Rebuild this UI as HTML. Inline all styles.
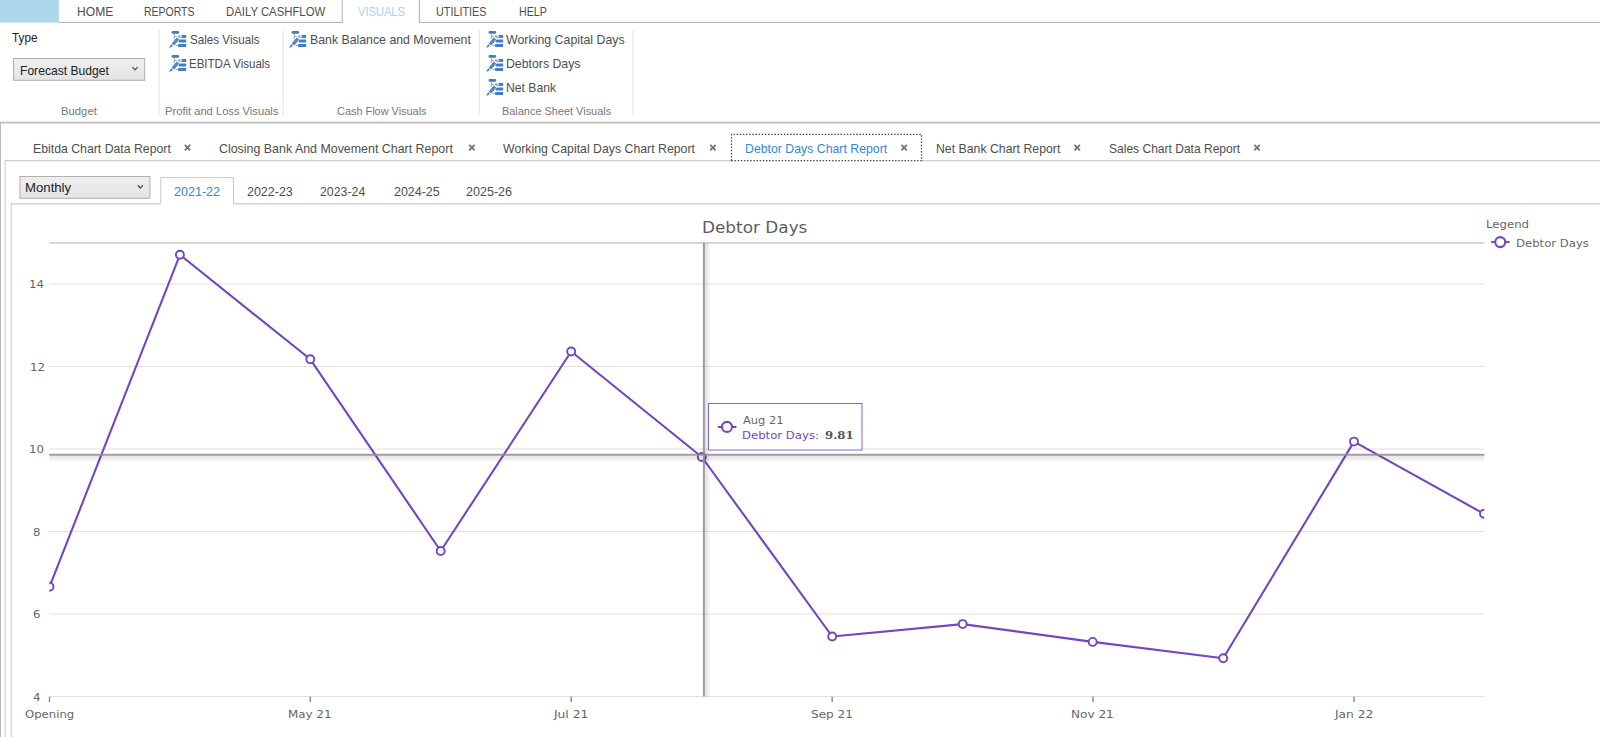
<!DOCTYPE html>
<html lang="en">
<head>
<meta charset="utf-8">
<title>Debtor Days Chart Report</title>
<style>
html,body{margin:0;padding:0;background:#fff;}
body{width:1600px;height:737px;position:relative;overflow:hidden;font-family:"Liberation Sans",sans-serif;}
.abs{position:absolute;}
.layer{position:absolute;left:0;top:0;width:1600px;height:737px;}
.t{position:absolute;white-space:nowrap;line-height:1;transform-origin:0 0;}
.ico{position:absolute;width:18px;height:18px;overflow:visible;}
</style>
</head>
<body>
<!-- ribbon + workspace chrome -->
<svg class="layer" id="chrome" width="1600" height="737" viewBox="0 0 1600 737">
<defs>
<linearGradient id="selg" x1="0" y1="0" x2="0" y2="1"><stop offset="0" stop-color="#efefef"/><stop offset="1" stop-color="#e4e4e4"/></linearGradient>
<linearGradient id="ribg" x1="0" y1="0" x2="0" y2="1"><stop offset="0" stop-color="#b2b2b2"/><stop offset="1" stop-color="#d2d2d2"/></linearGradient>
</defs>
<rect x="0" y="0" width="58.9" height="22.6" fill="#aed7eb"/>
<circle cx="7.5" cy="16.4" r="0.55" fill="#cdbab6"/>
<circle cx="13.5" cy="15.5" r="0.55" fill="#cdbab6"/>
<circle cx="19.5" cy="15.5" r="0.55" fill="#cdbab6"/>
<circle cx="25.5" cy="15.5" r="0.55" fill="#cdbab6"/>
<circle cx="31.5" cy="15.5" r="0.55" fill="#cdbab6"/>
<circle cx="37.5" cy="15.5" r="0.55" fill="#cdbab6"/>
<circle cx="43.5" cy="15.5" r="0.55" fill="#cdbab6"/>
<circle cx="49.5" cy="15.5" r="0.55" fill="#cdbab6"/>
<rect x="58.9" y="21.9" width="283.8" height="1" fill="#b0b0b0"/>
<rect x="418.9" y="21.9" width="1181.1" height="1" fill="#b0b0b0"/>
<rect x="341.7" y="0" width="1" height="22.9" fill="#b0b0b0"/>
<rect x="418.9" y="0" width="1" height="22.9" fill="#b0b0b0"/>
<rect x="13.5" y="58.5" width="131.2" height="21.8" fill="url(#selg)" stroke="#b0b0b0" stroke-width="1"/>
<path d="M132.4 67.1 L135 69.9 L137.6 67.1" fill="none" stroke="#505050" stroke-width="1.3"/>
<rect x="158.6" y="30" width="1" height="85.4" fill="#e1e1e1"/>
<rect x="282.6" y="30" width="1" height="85.4" fill="#e1e1e1"/>
<rect x="478.8" y="30" width="1" height="85.4" fill="#e1e1e1"/>
<rect x="632.6" y="30" width="1" height="85.4" fill="#e1e1e1"/>
<rect x="0" y="121.7" width="1600" height="2" fill="url(#ribg)"/>
<rect x="0" y="122" width="1" height="615" fill="#b9b9b9"/>
<rect x="5" y="160.1" width="726.5" height="1.2" fill="#c8c8c8"/>
<rect x="921.5" y="160.1" width="678.5" height="1.2" fill="#c8c8c8"/>
<rect x="4.6" y="160.2" width="1" height="577" fill="#c8c8c8"/>
<path d="M731.5 160.7 V134.3 H921.5 V160.7 Z" fill="#fff" stroke="#444" stroke-width="1.25" stroke-dasharray="1.45 1.7"/>
<rect x="11" y="203.2" width="150" height="1.2" fill="#c8c8c8"/>
<rect x="233" y="203.2" width="1367" height="1.2" fill="#c8c8c8"/>
<rect x="10.7" y="203.3" width="1" height="534" fill="#c8c8c8"/>
<path d="M160.8 203.8 V177.6 H233.5 V203.8" fill="#fff" stroke="#c6c6c6" stroke-width="1"/>
<rect x="19.9" y="176.5" width="130" height="21.8" fill="url(#selg)" stroke="#b0b0b0" stroke-width="1"/>
<path d="M137.7 185.2 L140.3 188 L142.9 185.2" fill="none" stroke="#505050" stroke-width="1.3"/>
<path d="M184.8 144.9 L190.2 150.29999999999998 M190.2 144.9 L184.8 150.29999999999998" stroke="#707070" stroke-width="1.7" fill="none"/>
<path d="M469.2 144.9 L474.59999999999997 150.29999999999998 M474.59999999999997 144.9 L469.2 150.29999999999998" stroke="#707070" stroke-width="1.7" fill="none"/>
<path d="M710.1999999999999 144.9 L715.6 150.29999999999998 M715.6 144.9 L710.1999999999999 150.29999999999998" stroke="#707070" stroke-width="1.7" fill="none"/>
<path d="M901.4499999999999 144.9 L906.85 150.29999999999998 M906.85 144.9 L901.4499999999999 150.29999999999998" stroke="#707070" stroke-width="1.7" fill="none"/>
<path d="M1074.5 144.9 L1079.9 150.29999999999998 M1079.9 144.9 L1074.5 150.29999999999998" stroke="#707070" stroke-width="1.7" fill="none"/>
<path d="M1254.3 144.9 L1259.7 150.29999999999998 M1259.7 144.9 L1254.3 150.29999999999998" stroke="#707070" stroke-width="1.7" fill="none"/>
</svg>
<!-- ribbon item icons -->
<svg class="ico" style="left:169px;top:30px;" viewBox="0 0 18 18">
<path d="M5.3 3.6 V9 M5.3 6.6 H7.8 M6.8 15.5 H10" fill="none" stroke="#9a9a9a" stroke-width="0.9"/>
<rect x="2.6" y="1" width="7.5" height="2.7" rx="0.9" fill="#3f7fc1"/>
<rect x="9.6" y="5" width="7.6" height="2.9" rx="0.3" fill="#3f7fc1"/>
<rect x="9.6" y="9.5" width="7.6" height="2.9" rx="0.3" fill="#3f7fc1"/>
<rect x="9.2" y="14" width="8" height="2.9" rx="0.3" fill="#3f7fc1"/>
<path d="M11.9 4.9 L2.2 16.3" stroke="#fff" stroke-opacity="0.9" stroke-width="3.9" fill="none"/>
<path d="M11.2 5.8 L9.6 7.7" stroke="#8db4de" stroke-width="2.8" fill="none"/>
<path d="M8.9 8.6 L4 14.4" stroke="#3f7fc1" stroke-width="3.1" fill="none"/>
<path d="M8.6 8.9 L4.2 14.1" stroke="#6a9bd2" stroke-width="0.7" fill="none"/>
<path d="M3.9 15.6 L2.9 16.8 L0.2 18.1 L1.3 15.4 L2.3 14.2 Z" fill="#3f7fc1"/>
</svg>
<svg class="ico" style="left:169px;top:54.1px;" viewBox="0 0 18 18">
<path d="M5.3 3.6 V9 M5.3 6.6 H7.8 M6.8 15.5 H10" fill="none" stroke="#9a9a9a" stroke-width="0.9"/>
<rect x="2.6" y="1" width="7.5" height="2.7" rx="0.9" fill="#3f7fc1"/>
<rect x="9.6" y="5" width="7.6" height="2.9" rx="0.3" fill="#3f7fc1"/>
<rect x="9.6" y="9.5" width="7.6" height="2.9" rx="0.3" fill="#3f7fc1"/>
<rect x="9.2" y="14" width="8" height="2.9" rx="0.3" fill="#3f7fc1"/>
<path d="M11.9 4.9 L2.2 16.3" stroke="#fff" stroke-opacity="0.9" stroke-width="3.9" fill="none"/>
<path d="M11.2 5.8 L9.6 7.7" stroke="#8db4de" stroke-width="2.8" fill="none"/>
<path d="M8.9 8.6 L4 14.4" stroke="#3f7fc1" stroke-width="3.1" fill="none"/>
<path d="M8.6 8.9 L4.2 14.1" stroke="#6a9bd2" stroke-width="0.7" fill="none"/>
<path d="M3.9 15.6 L2.9 16.8 L0.2 18.1 L1.3 15.4 L2.3 14.2 Z" fill="#3f7fc1"/>
</svg>
<svg class="ico" style="left:289px;top:30px;" viewBox="0 0 18 18">
<path d="M5.3 3.6 V9 M5.3 6.6 H7.8 M6.8 15.5 H10" fill="none" stroke="#9a9a9a" stroke-width="0.9"/>
<rect x="2.6" y="1" width="7.5" height="2.7" rx="0.9" fill="#3f7fc1"/>
<rect x="9.6" y="5" width="7.6" height="2.9" rx="0.3" fill="#3f7fc1"/>
<rect x="9.6" y="9.5" width="7.6" height="2.9" rx="0.3" fill="#3f7fc1"/>
<rect x="9.2" y="14" width="8" height="2.9" rx="0.3" fill="#3f7fc1"/>
<path d="M11.9 4.9 L2.2 16.3" stroke="#fff" stroke-opacity="0.9" stroke-width="3.9" fill="none"/>
<path d="M11.2 5.8 L9.6 7.7" stroke="#8db4de" stroke-width="2.8" fill="none"/>
<path d="M8.9 8.6 L4 14.4" stroke="#3f7fc1" stroke-width="3.1" fill="none"/>
<path d="M8.6 8.9 L4.2 14.1" stroke="#6a9bd2" stroke-width="0.7" fill="none"/>
<path d="M3.9 15.6 L2.9 16.8 L0.2 18.1 L1.3 15.4 L2.3 14.2 Z" fill="#3f7fc1"/>
</svg>
<svg class="ico" style="left:485.5px;top:30px;" viewBox="0 0 18 18">
<path d="M5.3 3.6 V9 M5.3 6.6 H7.8 M6.8 15.5 H10" fill="none" stroke="#9a9a9a" stroke-width="0.9"/>
<rect x="2.6" y="1" width="7.5" height="2.7" rx="0.9" fill="#3f7fc1"/>
<rect x="9.6" y="5" width="7.6" height="2.9" rx="0.3" fill="#3f7fc1"/>
<rect x="9.6" y="9.5" width="7.6" height="2.9" rx="0.3" fill="#3f7fc1"/>
<rect x="9.2" y="14" width="8" height="2.9" rx="0.3" fill="#3f7fc1"/>
<path d="M11.9 4.9 L2.2 16.3" stroke="#fff" stroke-opacity="0.9" stroke-width="3.9" fill="none"/>
<path d="M11.2 5.8 L9.6 7.7" stroke="#8db4de" stroke-width="2.8" fill="none"/>
<path d="M8.9 8.6 L4 14.4" stroke="#3f7fc1" stroke-width="3.1" fill="none"/>
<path d="M8.6 8.9 L4.2 14.1" stroke="#6a9bd2" stroke-width="0.7" fill="none"/>
<path d="M3.9 15.6 L2.9 16.8 L0.2 18.1 L1.3 15.4 L2.3 14.2 Z" fill="#3f7fc1"/>
</svg>
<svg class="ico" style="left:485.5px;top:54.1px;" viewBox="0 0 18 18">
<path d="M5.3 3.6 V9 M5.3 6.6 H7.8 M6.8 15.5 H10" fill="none" stroke="#9a9a9a" stroke-width="0.9"/>
<rect x="2.6" y="1" width="7.5" height="2.7" rx="0.9" fill="#3f7fc1"/>
<rect x="9.6" y="5" width="7.6" height="2.9" rx="0.3" fill="#3f7fc1"/>
<rect x="9.6" y="9.5" width="7.6" height="2.9" rx="0.3" fill="#3f7fc1"/>
<rect x="9.2" y="14" width="8" height="2.9" rx="0.3" fill="#3f7fc1"/>
<path d="M11.9 4.9 L2.2 16.3" stroke="#fff" stroke-opacity="0.9" stroke-width="3.9" fill="none"/>
<path d="M11.2 5.8 L9.6 7.7" stroke="#8db4de" stroke-width="2.8" fill="none"/>
<path d="M8.9 8.6 L4 14.4" stroke="#3f7fc1" stroke-width="3.1" fill="none"/>
<path d="M8.6 8.9 L4.2 14.1" stroke="#6a9bd2" stroke-width="0.7" fill="none"/>
<path d="M3.9 15.6 L2.9 16.8 L0.2 18.1 L1.3 15.4 L2.3 14.2 Z" fill="#3f7fc1"/>
</svg>
<svg class="ico" style="left:485.5px;top:78px;" viewBox="0 0 18 18">
<path d="M5.3 3.6 V9 M5.3 6.6 H7.8 M6.8 15.5 H10" fill="none" stroke="#9a9a9a" stroke-width="0.9"/>
<rect x="2.6" y="1" width="7.5" height="2.7" rx="0.9" fill="#3f7fc1"/>
<rect x="9.6" y="5" width="7.6" height="2.9" rx="0.3" fill="#3f7fc1"/>
<rect x="9.6" y="9.5" width="7.6" height="2.9" rx="0.3" fill="#3f7fc1"/>
<rect x="9.2" y="14" width="8" height="2.9" rx="0.3" fill="#3f7fc1"/>
<path d="M11.9 4.9 L2.2 16.3" stroke="#fff" stroke-opacity="0.9" stroke-width="3.9" fill="none"/>
<path d="M11.2 5.8 L9.6 7.7" stroke="#8db4de" stroke-width="2.8" fill="none"/>
<path d="M8.9 8.6 L4 14.4" stroke="#3f7fc1" stroke-width="3.1" fill="none"/>
<path d="M8.6 8.9 L4.2 14.1" stroke="#6a9bd2" stroke-width="0.7" fill="none"/>
<path d="M3.9 15.6 L2.9 16.8 L0.2 18.1 L1.3 15.4 L2.3 14.2 Z" fill="#3f7fc1"/>
</svg>
<!-- chart -->
<svg class="layer" id="chart" width="1600" height="737" viewBox="0 0 1600 737">
<defs><clipPath id="plot"><rect x="49.3" y="243" width="1435" height="454"/></clipPath><linearGradient id="shh" x1="0" y1="0" x2="0" y2="1"><stop offset="0" stop-color="#000" stop-opacity="0.105"/><stop offset="0.7" stop-color="#000" stop-opacity="0.062"/><stop offset="1" stop-color="#000" stop-opacity="0.02"/></linearGradient><linearGradient id="shv" x1="0" y1="0" x2="1" y2="0"><stop offset="0" stop-color="#000" stop-opacity="0.115"/><stop offset="0.7" stop-color="#000" stop-opacity="0.066"/><stop offset="1" stop-color="#000" stop-opacity="0.02"/></linearGradient></defs>
<rect x="49.3" y="283.4" width="1435" height="1" fill="#dfdfdf"/>
<rect x="49.3" y="365.9" width="1435" height="1" fill="#dfdfdf"/>
<rect x="49.3" y="448.5" width="1435" height="1" fill="#dfdfdf"/>
<rect x="49.3" y="531.0" width="1435" height="1" fill="#dfdfdf"/>
<rect x="49.3" y="613.5" width="1435" height="1" fill="#dfdfdf"/>
<rect x="49.3" y="696.1" width="1435" height="1" fill="#dfdfdf"/>
<rect x="49.3" y="242.4" width="1435" height="1.1" fill="#b6b6b6"/>
<rect x="48.75" y="696.7" width="1.5" height="5.4" fill="#8f8f8f"/>
<rect x="309.55" y="696.7" width="1.5" height="5.4" fill="#8f8f8f"/>
<rect x="570.45" y="696.7" width="1.5" height="5.4" fill="#8f8f8f"/>
<rect x="831.45" y="696.7" width="1.5" height="5.4" fill="#8f8f8f"/>
<rect x="1092.25" y="696.7" width="1.5" height="5.4" fill="#8f8f8f"/>
<rect x="1353.25" y="696.7" width="1.5" height="5.4" fill="#8f8f8f"/>
<g clip-path="url(#plot)"><path d="M49.5 586.8 L179.9 254.8 L310.3 359.3 L440.7 551.0 L571.2 351.5 L701.8 457.0 L832.2 636.5 L962.7 624.1 L1092.7 641.9 L1223.2 658.3 L1354 441.6 L1484 513.8" fill="none" stroke="#7446BF" stroke-width="2.1" stroke-linejoin="round"/>
<circle cx="49.5" cy="586.8" r="4" fill="#fff" stroke="#7446BF" stroke-width="1.9"/>
<circle cx="179.9" cy="254.8" r="4" fill="#fff" stroke="#7446BF" stroke-width="1.9"/>
<circle cx="310.3" cy="359.3" r="4" fill="#fff" stroke="#7446BF" stroke-width="1.9"/>
<circle cx="440.7" cy="551.0" r="4" fill="#fff" stroke="#7446BF" stroke-width="1.9"/>
<circle cx="571.2" cy="351.5" r="4" fill="#fff" stroke="#7446BF" stroke-width="1.9"/>
<circle cx="701.8" cy="457.0" r="4" fill="#fff" stroke="#7446BF" stroke-width="1.9"/>
<circle cx="832.2" cy="636.5" r="4" fill="#fff" stroke="#7446BF" stroke-width="1.9"/>
<circle cx="962.7" cy="624.1" r="4" fill="#fff" stroke="#7446BF" stroke-width="1.9"/>
<circle cx="1092.7" cy="641.9" r="4" fill="#fff" stroke="#7446BF" stroke-width="1.9"/>
<circle cx="1223.2" cy="658.3" r="4" fill="#fff" stroke="#7446BF" stroke-width="1.9"/>
<circle cx="1354" cy="441.6" r="4" fill="#fff" stroke="#7446BF" stroke-width="1.9"/>
<circle cx="1484" cy="513.8" r="4" fill="#fff" stroke="#7446BF" stroke-width="1.9"/>
</g>
<rect x="704.8" y="243" width="4.8" height="453.5" fill="url(#shv)"/>
<rect x="49.3" y="455.4" width="1435" height="5.6" fill="url(#shh)"/>
<rect x="702.9" y="243" width="2" height="453.5" fill="#8e8e8e" fill-opacity="0.88"/>
<rect x="49.3" y="453.8" width="1435" height="1.9" fill="#8e8e8e" fill-opacity="0.88"/>
<rect x="708.5" y="403.5" width="153.5" height="46.5" fill="#fff" stroke="#7446BF" stroke-opacity="0.85" stroke-width="1"/>
<path d="M718.6 426.9 H735.6" stroke="#7446BF" stroke-width="2" stroke-linecap="round"/><circle cx="727" cy="426.9" r="5" fill="#fff" stroke="#7446BF" stroke-width="2.1"/>
<path d="M1492 242.1 H1508.8" stroke="#7446BF" stroke-width="2" stroke-linecap="round"/><circle cx="1500.25" cy="242.1" r="5" fill="#fff" stroke="#7446BF" stroke-width="2.1"/>
</svg>
<!-- text -->
<span class="t" style='left:76.50px;top:4.90px;font-size:13px;font-family:"Liberation Sans", sans-serif;color:#4e4e4e;transform:scaleX(0.9309);'>HOME</span>
<span class="t" style='left:144.38px;top:4.90px;font-size:13px;font-family:"Liberation Sans", sans-serif;color:#4e4e4e;transform:scaleX(0.8043);'>REPORTS</span>
<span class="t" style='left:226.06px;top:4.90px;font-size:13px;font-family:"Liberation Sans", sans-serif;color:#4e4e4e;transform:scaleX(0.8726);'>DAILY CASHFLOW</span>
<span class="t" style='left:436.14px;top:4.90px;font-size:13px;font-family:"Liberation Sans", sans-serif;color:#4e4e4e;transform:scaleX(0.8299);'>UTILITIES</span>
<span class="t" style='left:518.62px;top:4.90px;font-size:13px;font-family:"Liberation Sans", sans-serif;color:#4e4e4e;transform:scaleX(0.8210);'>HELP</span>
<span class="t" style='left:357.80px;top:4.90px;font-size:13px;font-family:"Liberation Sans", sans-serif;color:#a5d3ee;transform:scaleX(0.8553);'>VISUALS</span>
<span class="t" style='left:12.16px;top:31.00px;font-size:13px;font-family:"Liberation Sans", sans-serif;color:#222222;transform:scaleX(0.9018);'>Type</span>
<span class="t" style='left:20.15px;top:63.60px;font-size:13px;font-family:"Liberation Sans", sans-serif;color:#222222;transform:scaleX(0.9310);'>Forecast Budget</span>
<span class="t" style='left:61.43px;top:105.80px;font-size:11.3px;font-family:"Liberation Sans", sans-serif;color:#777777;transform:scaleX(0.9999);'>Budget</span>
<span class="t" style='left:164.74px;top:105.80px;font-size:11.3px;font-family:"Liberation Sans", sans-serif;color:#777777;transform:scaleX(0.9888);'>Profit and Loss Visuals</span>
<span class="t" style='left:336.85px;top:105.80px;font-size:11.3px;font-family:"Liberation Sans", sans-serif;color:#777777;transform:scaleX(0.9660);'>Cash Flow Visuals</span>
<span class="t" style='left:502.26px;top:105.80px;font-size:11.3px;font-family:"Liberation Sans", sans-serif;color:#777777;transform:scaleX(0.9673);'>Balance Sheet Visuals</span>
<span class="t" style='left:189.53px;top:32.80px;font-size:13.5px;font-family:"Liberation Sans", sans-serif;color:#4e4e4e;transform:scaleX(0.8618);'>Sales Visuals</span>
<span class="t" style='left:189.40px;top:57.00px;font-size:13.5px;font-family:"Liberation Sans", sans-serif;color:#4e4e4e;transform:scaleX(0.8536);'>EBITDA Visuals</span>
<span class="t" style='left:309.54px;top:32.80px;font-size:13.5px;font-family:"Liberation Sans", sans-serif;color:#4e4e4e;transform:scaleX(0.9119);'>Bank Balance and Movement</span>
<span class="t" style='left:506.10px;top:32.80px;font-size:13.5px;font-family:"Liberation Sans", sans-serif;color:#4e4e4e;transform:scaleX(0.9162);'>Working Capital Days</span>
<span class="t" style='left:505.84px;top:57.00px;font-size:13.5px;font-family:"Liberation Sans", sans-serif;color:#4e4e4e;transform:scaleX(0.9103);'>Debtors Days</span>
<span class="t" style='left:505.85px;top:81.30px;font-size:13.5px;font-family:"Liberation Sans", sans-serif;color:#4e4e4e;transform:scaleX(0.9033);'>Net Bank</span>
<span class="t" style='left:32.54px;top:141.80px;font-size:13.5px;font-family:"Liberation Sans", sans-serif;color:#4e4e4e;transform:scaleX(0.9092);'>Ebitda Chart Data Report</span>
<span class="t" style='left:219.26px;top:141.80px;font-size:13.5px;font-family:"Liberation Sans", sans-serif;color:#4e4e4e;transform:scaleX(0.9192);'>Closing Bank And Movement Chart Report</span>
<span class="t" style='left:503.40px;top:141.80px;font-size:13.5px;font-family:"Liberation Sans", sans-serif;color:#4e4e4e;transform:scaleX(0.9116);'>Working Capital Days Chart Report</span>
<span class="t" style='left:744.74px;top:141.80px;font-size:13.5px;font-family:"Liberation Sans", sans-serif;color:#3488d6;transform:scaleX(0.9113);'>Debtor Days Chart Report</span>
<span class="t" style='left:935.74px;top:141.80px;font-size:13.5px;font-family:"Liberation Sans", sans-serif;color:#4e4e4e;transform:scaleX(0.9103);'>Net Bank Chart Report</span>
<span class="t" style='left:1108.67px;top:141.80px;font-size:13.5px;font-family:"Liberation Sans", sans-serif;color:#4e4e4e;transform:scaleX(0.8913);'>Sales Chart Data Report</span>
<span class="t" style='left:25.17px;top:181.40px;font-size:13.5px;font-family:"Liberation Sans", sans-serif;color:#222222;transform:scaleX(0.9759);'>Monthly</span>
<span class="t" style='left:174.25px;top:184.90px;font-size:13.5px;font-family:"Liberation Sans", sans-serif;color:#3488d6;transform:scaleX(0.9296);'>2021-22</span>
<span class="t" style='left:247.36px;top:184.90px;font-size:13.5px;font-family:"Liberation Sans", sans-serif;color:#4e4e4e;transform:scaleX(0.9234);'>2022-23</span>
<span class="t" style='left:320.47px;top:184.90px;font-size:13.5px;font-family:"Liberation Sans", sans-serif;color:#4e4e4e;transform:scaleX(0.9132);'>2023-24</span>
<span class="t" style='left:393.61px;top:184.90px;font-size:13.5px;font-family:"Liberation Sans", sans-serif;color:#4e4e4e;transform:scaleX(0.9223);'>2024-25</span>
<span class="t" style='left:466.45px;top:184.90px;font-size:13.5px;font-family:"Liberation Sans", sans-serif;color:#4e4e4e;transform:scaleX(0.9296);'>2025-26</span>
<span class="t" style='left:701.62px;top:220.10px;font-size:16px;font-family:"DejaVu Sans", "Liberation Sans", sans-serif;color:#5e5e5e;transform:scaleX(1.0542);'>Debtor Days</span>
<span class="t" style='left:1485.98px;top:219.40px;font-size:11px;font-family:"DejaVu Sans", "Liberation Sans", sans-serif;color:#666666;transform:scaleX(1.0658);'>Legend</span>
<span class="t" style='left:1515.64px;top:237.90px;font-size:11px;font-family:"DejaVu Sans", "Liberation Sans", sans-serif;color:#666666;transform:scaleX(1.0610);'>Debtor Days</span>
<span class="t" style='left:742.85px;top:415.40px;font-size:11px;font-family:"DejaVu Sans", "Liberation Sans", sans-serif;color:#666666;transform:scaleX(1.0376);'>Aug 21</span>
<span class="t" style='left:741.78px;top:429.50px;font-size:11px;font-family:"DejaVu Sans", "Liberation Sans", sans-serif;color:#7446BF;transform:scaleX(1.0623);'>Debtor Days:</span>
<span class="t" style='left:824.61px;top:429.50px;font-size:11px;font-family:"DejaVu Serif", "Liberation Serif", serif;color:#555555;font-weight:700;transform:scaleX(1.0680);'>9.81</span>
<span class="t" style='left:29.29px;top:279.10px;font-size:11px;font-family:"DejaVu Sans", "Liberation Sans", sans-serif;color:#666666;transform:scaleX(1.0700);'>14</span>
<span class="t" style='left:29.56px;top:361.60px;font-size:11px;font-family:"DejaVu Sans", "Liberation Sans", sans-serif;color:#666666;transform:scaleX(1.0700);'>12</span>
<span class="t" style='left:29.34px;top:444.10px;font-size:11px;font-family:"DejaVu Sans", "Liberation Sans", sans-serif;color:#666666;transform:scaleX(1.0700);'>10</span>
<span class="t" style='left:32.88px;top:526.70px;font-size:11px;font-family:"DejaVu Sans", "Liberation Sans", sans-serif;color:#666666;transform:scaleX(1.0700);'>8</span>
<span class="t" style='left:32.80px;top:609.20px;font-size:11px;font-family:"DejaVu Sans", "Liberation Sans", sans-serif;color:#666666;transform:scaleX(1.0700);'>6</span>
<span class="t" style='left:32.91px;top:691.70px;font-size:11px;font-family:"DejaVu Sans", "Liberation Sans", sans-serif;color:#666666;transform:scaleX(1.0700);'>4</span>
<span class="t" style='left:24.86px;top:709.25px;font-size:11px;font-family:"DejaVu Sans", "Liberation Sans", sans-serif;color:#666666;transform:scaleX(1.0601);'>Opening</span>
<span class="t" style='left:288.12px;top:709.25px;font-size:11px;font-family:"DejaVu Sans", "Liberation Sans", sans-serif;color:#666666;transform:scaleX(1.0802);'>May 21</span>
<span class="t" style='left:554.42px;top:709.25px;font-size:11px;font-family:"DejaVu Sans", "Liberation Sans", sans-serif;color:#666666;transform:scaleX(1.1114);'>Jul 21</span>
<span class="t" style='left:810.98px;top:709.25px;font-size:11px;font-family:"DejaVu Sans", "Liberation Sans", sans-serif;color:#666666;transform:scaleX(1.0951);'>Sep 21</span>
<span class="t" style='left:1071.35px;top:709.25px;font-size:11px;font-family:"DejaVu Sans", "Liberation Sans", sans-serif;color:#666666;transform:scaleX(1.0972);'>Nov 21</span>
<span class="t" style='left:1335.07px;top:709.25px;font-size:11px;font-family:"DejaVu Sans", "Liberation Sans", sans-serif;color:#666666;transform:scaleX(1.1133);'>Jan 22</span>
</body>
</html>
